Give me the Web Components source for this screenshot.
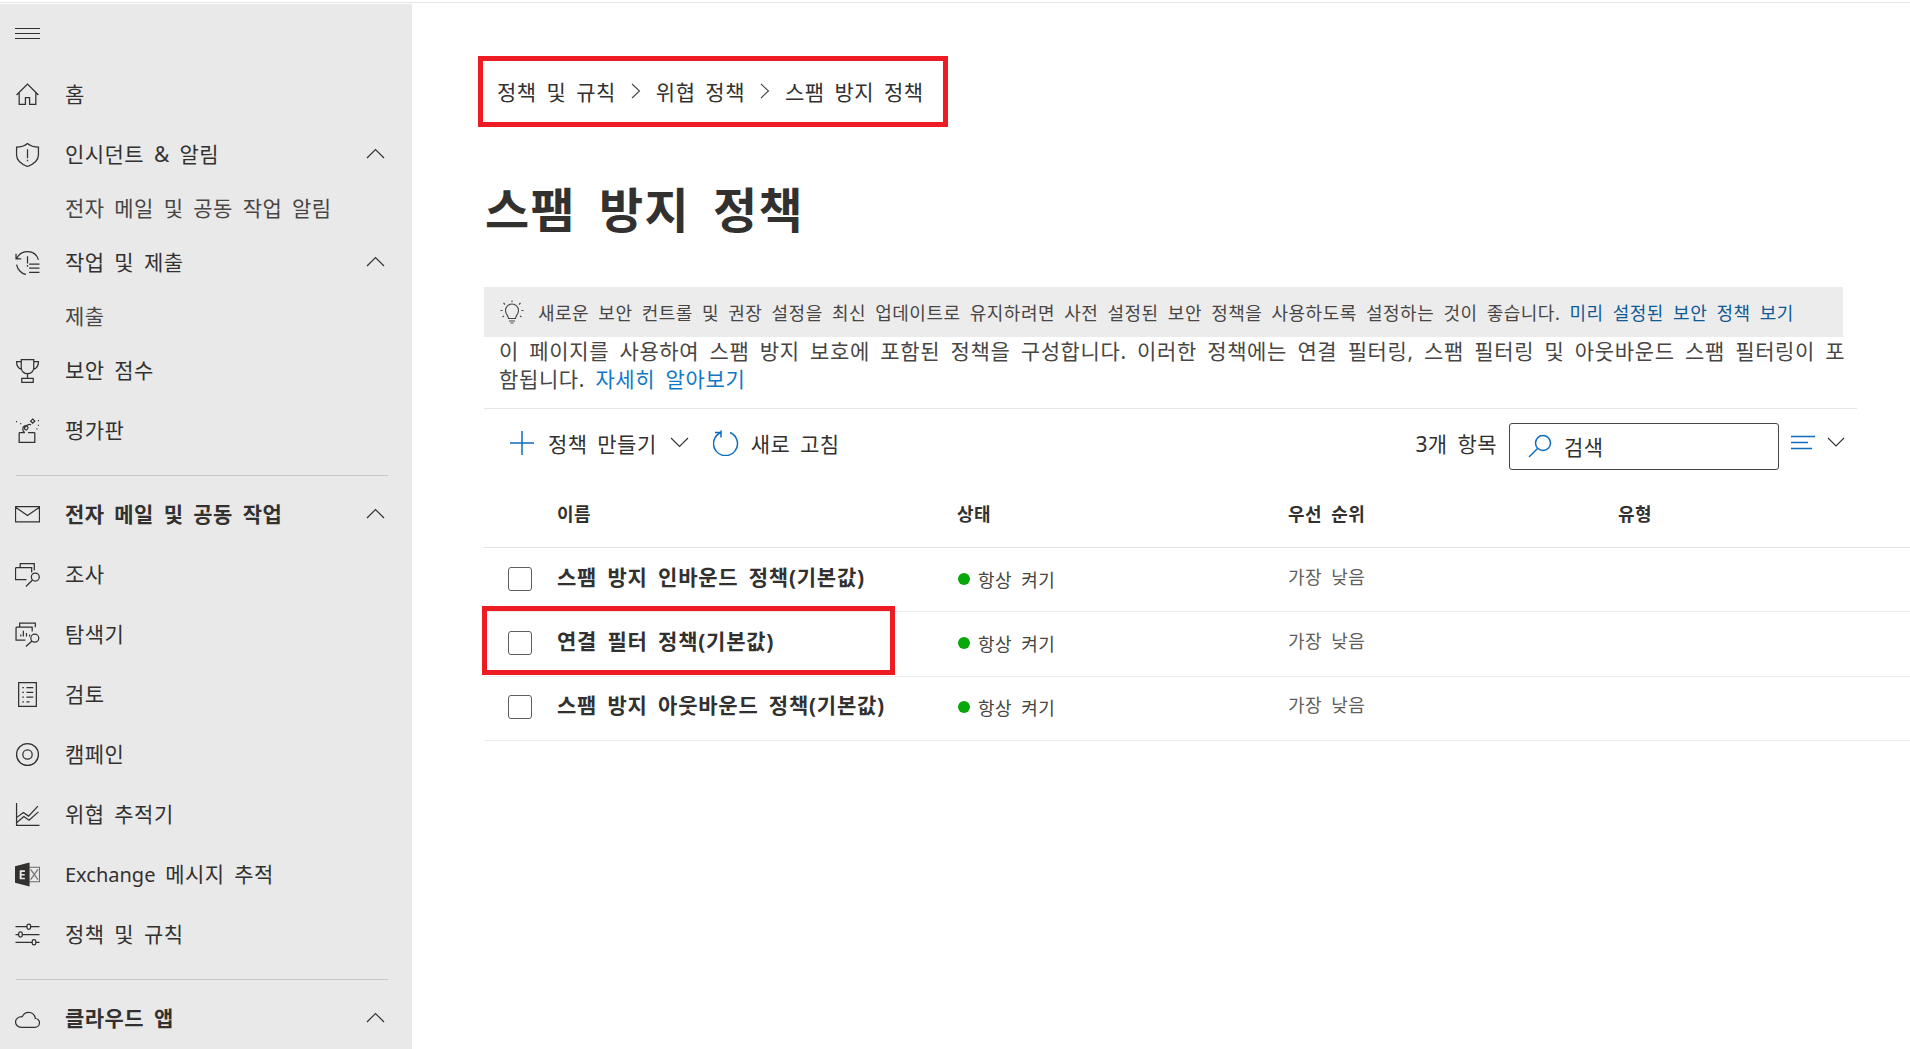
<!DOCTYPE html>
<html lang="ko">
<head>
<meta charset="utf-8">
<title>스팸 방지 정책</title>
<style>
  html, body { margin: 0; height: 100%; background: #fff; overflow: hidden; }
  body {
    font-family: "Noto Sans", "Noto Sans CJK KR", sans-serif;
    color: #323130;
  }
</style>
</head>
<body>
<app-shell>
  <side-nav slot="nav"></side-nav>
  <policy-page></policy-page>
</app-shell>

<script>
const ICONS = {
  home: '<path d="M1.5 12.5 12 2l10.500 10.500M4 10v11.500h6V15h4v6.500h6V10"/>',
  shield: '<path d="M12 1.500c3 2.500 6.500 3.500 10.500 3.500v7.500c0 5-4 8.500-10.500 11C5.500 21 1.500 17.500 1.500 12.500V5C5.500 5 9 4 12 1.500z"/><path d="M12 7v8.500M12 17v1.500"/>',
  history: '<path d="M1 3.500v5h5M1.500 8.500C3.500 4 7.500 1.500 12 1.500c5 0 9 3 10.500 8M1.500 14c1 5 5 9 9 9.500"/><path d="M12 6v7M12 14.500v1.500M13.500 13.500h10M13.500 17.500h10M13.500 21.500h10"/>',
  trophy: '<path d="M6 1.500h12v8c0 3-2.500 5.500-6 5.500s-6-2.500-6-5.500zM6 3.500H1.500c0 4 1.500 6.500 5 7.500M18 3.500h4.500c0 4-1.500 6.500-5 7.500M12 15v4M6.500 19.500h11v4h-11z"/>',
  dash: '<path d="M4 14v9.500h15V14M4 14h5.500M12.500 14H19M9.500 14C7 13 6.500 8.500 9.500 7.500c2.500-.8 4 2 2 3.500-1.500 1-3-.5-2-2 1-1.800 3.500-3.500 6-2.500"/><path d="M17 1l2 2-2 2-2-2zM1 3.500h1M5 5.500h1M22 7h1M22 2.500h1M20.500 10.500h1"/>',
  mail: '<path d="M.500 4.500h23v14.500H.500zM.500 5 12 13 23.500 5"/>',
  invest: '<path d="M5 5V1.500h13.500V8M.500 5.500H16V10M.500 5.500v11.500h10.500"/><circle cx="19.500" cy="14.500" r="3.800"/><path d="M16.800 17.300 10.500 23.500"/>',
  explorer: '<path d="M4.500 4.500V1h15v4M1 5h15.500v4M1 5v12.500h9"/><circle cx="19" cy="15.500" r="3.800"/><path d="M16.300 18.300 10.500 23.500M5.500 14v-2M8 14V8.500M11 14v-3.500M14 14v-2"/>',
  review: '<path d="M3.500.500h17v23h-17zM7 5.500h1.500M11 5.500h6.500M7 10h1.500M11 10h6.500M7 14.500h1.500M11 14.500h6.500M7 19h1.500M11 19h3"/>',
  campaign: '<circle cx="12" cy="12" r="10.500"/><circle cx="12" cy="12" r="4.500"/>',
  chart: '<path d="M1.500 1v21.500h22M1.500 15l6.500-5 5 3.500L22 4M1.500 20l7-6 5 3.500 9-8"/>',
  rules: '<path d="M.500 4.500h11M15 4.500h8.500M.500 12h3M7 12h16.500M.500 19.500h16M20 19.500h3.500"/><rect x="11.500" y="2" width="3.500" height="5" rx="1.700"/><rect x="3.500" y="9.500" width="3.500" height="5" rx="1.700"/><rect x="16.500" y="17" width="3.500" height="5" rx="1.700"/>',
  cloud: '<path d="M6 20.500h13c2.500 0 4.500-1.800 4.500-4.200 0-2.300-1.800-4.100-4-4.300C19 8.500 16.300 6 13 6c-2.800 0-5 1.700-6 4.200C3.300 10 .500 12.500.500 15.300c0 3 2.500 5.200 5.500 5.200z"/>'
};

function icon(name) {
  return `<svg viewBox="0 0 24 24" width="25" height="25" fill="none" stroke="currentColor" stroke-width="1.200">${ICONS[name]}</svg>`;
}

// 본문 글자 크기: 큰 글자 / 작은 글자
const TEXT_L = 'font-size:21px;letter-spacing:.45px;word-spacing:3.9px;';
const TEXT_S = 'font-size:18px;letter-spacing:.5px;word-spacing:4px;';
const COLS = '73px 400px 331px 330px 1fr';

class AppShell extends HTMLElement {
  constructor() {
    super();
    this.attachShadow({ mode: 'open' }).innerHTML = `
      <style>
        :host {
          display: flex;
          height: 1049px;
          box-sizing: border-box;
          padding-top: 4px;
          position: relative;
        }
        :host::before {
          content: '';
          position: absolute;
          left: 0; right: 0; top: 2px;
          height: 1px;
          background: #e6e6e6;
        }
      </style>
      <slot name="nav"></slot>
      <slot></slot>`;
  }
}

class NavItem extends HTMLElement {
  constructor() {
    super();
    this.attachShadow({ mode: 'open' });
  }
  connectedCallback() {
    const name = this.getAttribute('icon');
    const open = this.hasAttribute('open');
    this.shadowRoot.innerHTML = `
      <style>
        :host {
          display: flex;
          align-items: center;
          height: 60px;
          padding-left: 15px;
          padding-right: 27px;
          ${TEXT_L}
          color: #323130;
        }
        :host([sub]) { height: 48px; padding-left: 65px; color: #484644; }
        :host([strong]) { font-weight: 700; }
        .ic { width: 50px; height: 25px; flex: none; display: block; }
        .ic svg { display: block; }
        .label { flex: 1; white-space: nowrap; padding-bottom: 2px; }
        .chev { width: 19px; height: 11px; flex: none; margin-bottom: 2px; }
        ::slotted(span) { font-size: 20px; letter-spacing: 0; }
      </style>
      ${name ? `<span class="ic">${name === 'exchange' ? this.exchangeLogo() : icon(name)}</span>` : ''}
      <span class="label"><slot></slot></span>
      ${open ? '<svg class="chev" viewBox="0 0 19 11" fill="none" stroke="currentColor" stroke-width="1.200"><path d="M1 10 9.500 1.500 18 10"/></svg>' : ''}`;
  }
  exchangeLogo() {
    return `<svg viewBox="0 0 24 24" width="25" height="25">
      <path d="M13 5h10.500v14H13z" fill="#e9e9e9" stroke="#6b6b6b" stroke-width="1"/>
      <path d="M15 7l7 10M22 7l-7 10" stroke="#7a7a7a" stroke-width="1.300" fill="none"/>
      <path d="M0 4 14 .500v23L0 20z" fill="#323130"/>
      <path d="M4.500 8h5v1.500H6.300v2h3v1.500h-3v2h3.200V16.500h-5z" fill="#e9e9e9"/>
    </svg>`;
  }
}

class SideNav extends HTMLElement {
  constructor() {
    super();
    this.attachShadow({ mode: 'open' }).innerHTML = `
      <style>
        :host {
          display: block;
          width: 412px;
          flex: none;
          background: #e9e9e9;
          overflow: hidden;
        }
        .burger {
          display: flex;
          flex-direction: column;
          gap: 4px;
          width: 25px;
          margin: 24px 0 25px 15px;
          height: 11px;
        }
        .burger i { display: block; height: 1px; background: #323130; }
        hr {
          border: 0;
          height: 1px;
          background: #c8c8c8;
          margin: 15px 24px 8px 16px;
        }
      </style>
      <div class="burger"><i></i><i></i><i></i></div>
      <nav-item icon="home">홈</nav-item>
      <nav-item icon="shield" open>인시던트 &amp; 알림</nav-item>
      <nav-item sub>전자 메일 및 공동 작업 알림</nav-item>
      <nav-item icon="history" open>작업 및 제출</nav-item>
      <nav-item sub>제출</nav-item>
      <nav-item icon="trophy">보안 점수</nav-item>
      <nav-item icon="dash">평가판</nav-item>
      <hr>
      <nav-item icon="mail" open strong>전자 메일 및 공동 작업</nav-item>
      <nav-item icon="invest">조사</nav-item>
      <nav-item icon="explorer">탐색기</nav-item>
      <nav-item icon="review">검토</nav-item>
      <nav-item icon="campaign">캠페인</nav-item>
      <nav-item icon="chart">위협 추적기</nav-item>
      <nav-item icon="exchange"><span>Exchange</span> 메시지 추적</nav-item>
      <nav-item icon="rules">정책 및 규칙</nav-item>
      <hr>
      <nav-item icon="cloud" open strong>클라우드 앱</nav-item>`;
  }
}

class RedMark extends HTMLElement {
  constructor() {
    super();
    this.attachShadow({ mode: 'open' }).innerHTML = `
      <style>
        :host {
          display: block;
          position: absolute;
          box-sizing: border-box;
          border: 5px solid #ed1c24;
          pointer-events: none;
        }
      </style>`;
  }
}

class PolicyRow extends HTMLElement {
  constructor() {
    super();
    this.attachShadow({ mode: 'open' }).innerHTML = `
      <style>
        :host {
          display: grid;
          grid-template-columns: ${COLS};
          height: 64.4px;
          align-items: center;
          border-bottom: 1px solid #edebe9;
          box-sizing: border-box;
          ${TEXT_S}
        }
        .check {
          width: 24px;
          height: 24px;
          margin: 0 0 2px 24px;
          border: 1px solid #605e5c;
          border-radius: 3px;
          box-sizing: border-box;
        }
        .name { font-size: 21px; letter-spacing: .75px; word-spacing: 4.2px; font-weight: 700; white-space: nowrap; margin-bottom: 8px; }
        .state { display: flex; align-items: center; gap: 8px; color: #484644; margin-bottom: 2px; }
        .dot { width: 12px; height: 12px; border-radius: 50%; background: #0aa70a; margin-left: 1px; }
        .prio { color: #605e5c; margin-bottom: 8px; }
      </style>
      <div class="check"></div>
      <div class="name"><slot></slot></div>
      <div class="state"><span class="dot"></span>항상 켜기</div>
      <div class="prio">가장 낮음</div>`;
  }
}

class PolicyTable extends HTMLElement {
  constructor() {
    super();
    this.attachShadow({ mode: 'open' }).innerHTML = `
      <style>
        :host { display: block; margin-top: 5px; }
        .head {
          display: grid;
          grid-template-columns: ${COLS};
          height: 64px;
          padding-bottom: 6px;
          align-items: center;
          border-bottom: 1px solid #e3e3e3;
          box-sizing: border-box;
          ${TEXT_S}
          font-weight: 700;
        }
        .head span:first-child { grid-column: 2; }
      </style>
      <div class="head"><span>이름</span><span>상태</span><span>우선 순위</span><span>유형</span></div>
      <slot></slot>`;
  }
}

class PolicyToolbar extends HTMLElement {
  constructor() {
    super();
    this.attachShadow({ mode: 'open' }).innerHTML = `
      <style>
        :host {
          display: flex;
          align-items: center;
          height: 67px;
          margin: 0 53px 0 0;
          padding: 0 10px 3px 25px;
          border-top: 1px solid #e6e6e6;
          ${TEXT_L}
        }
        .btn { display: flex; align-items: center; white-space: nowrap; }
        svg { display: block; flex: none; }
        .count { margin-left: auto; margin-right: 12px; white-space: nowrap; }
        .search {
          width: 270px;
          height: 47px;
          border: 1px solid #484644;
          border-radius: 3px;
          box-sizing: border-box;
          display: flex;
          align-items: center;
          gap: 12px;
          padding-left: 18px;
          margin-top: 7px;
        }
        .right { margin-left: 12px; }
      </style>
      <div class="btn">
        <svg width="26" height="26" viewBox="0 0 26 26" fill="none" stroke="#0f6cbd" stroke-width="1.500"><path d="M13 1v24M1 13h24"/></svg>
        <span style="margin-left:13px">정책 만들기</span>
        <svg style="margin-left:13px" width="19" height="11" viewBox="0 0 19 11" fill="none" stroke="#323130" stroke-width="1.100"><path d="M1 1l8.500 8.500L18 1"/></svg>
      </div>
      <div class="btn" style="margin-left:24px">
        <svg width="26" height="26" viewBox="0 0 26 26" fill="none" stroke="#0f6cbd" stroke-width="1.500"><path d="M17 2.500A12 12 0 1 1 8 2.500M8 .5v7M8 2.500l-6 0" stroke-linejoin="round"/></svg>
        <span style="margin-left:12px">새로 고침</span>
      </div>
      <span class="count">3개 항목</span>
      <div class="search">
        <svg width="24" height="24" viewBox="0 0 24 24" fill="none" stroke="#0f6cbd" stroke-width="1.500"><circle cx="15" cy="9" r="7.500"/><path d="M9.500 14.500 1 23"/></svg>
        <span>검색</span>
      </div>
      <svg class="right" width="24" height="16" viewBox="0 0 24 16" fill="none" stroke="#0f6cbd" stroke-width="1.500"><path d="M0 1.500h24M0 7.500h17M0 13.500h21"/></svg>
      <svg style="margin-left:12px;margin-right:2px" width="18" height="11" viewBox="0 0 18 11" fill="none" stroke="#323130" stroke-width="1.100"><path d="M1 1l8 8 8-8"/></svg>`;
  }
}

class PolicyPage extends HTMLElement {
  constructor() {
    super();
    this.attachShadow({ mode: 'open' }).innerHTML = `
      <style>
        :host {
          display: block;
          flex: 1;
          min-width: 0;
          position: relative;
          padding: 0 0 0 72px;
        }
        .crumbs {
          display: flex;
          align-items: center;
          height: 40px;
          margin: 67px 0 0 13px;
          ${TEXT_L}
          letter-spacing: .5px;
          white-space: nowrap;
        }
        .crumbs svg { margin: 0 15px; }
        h1 {
          margin: 65px 0 0 1px;
          font-size: 48px;
          letter-spacing: 1.4px;
          word-spacing: 9px;
          font-weight: 700;
          line-height: 68px;
          white-space: nowrap;
        }
        .banner {
          display: flex;
          align-items: center;
          gap: 14px;
          height: 50px;
          margin: 43px 67px 0 0;
          padding-left: 16px;
          background: #ececec;
          ${TEXT_S}
          color: #484644;
          white-space: nowrap;
        }
        a { color: #0f5a94; text-decoration: none; }
        .intro a { color: #0f78c8; }
        .intro {
          margin: 0 53px 0 15px;
          font-size: 21px;
          letter-spacing: .62px;
          word-spacing: 4.3px;
          line-height: 28px;
          height: 71px;
          color: #484644;
          white-space: nowrap;
        }
      </style>
      <div class="crumbs">
        <span>정책 및 규칙</span>
        <svg width="10" height="16" viewBox="0 0 10 16" fill="none" stroke="#484644" stroke-width="1.100"><path d="M1 1l7.500 7L1 15"/></svg>
        <span>위협 정책</span>
        <svg width="10" height="16" viewBox="0 0 10 16" fill="none" stroke="#484644" stroke-width="1.100"><path d="M1 1l7.500 7L1 15"/></svg>
        <span>스팸 방지 정책</span>
      </div>
      <h1>스팸 방지 정책</h1>
      <div class="banner">
        <svg width="24" height="24" viewBox="0 0 24 24" fill="none" stroke="#484644" stroke-width="1.100"><path d="M8.500 18.500c0-3-3-4-3-8a6.500 6.500 0 0 1 13 0c0 4-3 5-3 8zM9 21h6M10.500 23h3M12 .5v1.500M3.500 3l1.500 1.500M20.500 3 19 4.500M.5 10.500h2M21.500 10.500h2M2.500 17l1.500-1M21.500 17 20 16"/></svg>
        <span>새로운 보안 컨트롤 및 권장 설정을 최신 업데이트로 유지하려면 사전 설정된 보안 정책을 사용하도록 설정하는 것이 좋습니다. <a>미리 설정된 보안 정책 보기</a></span>
      </div>
      <div class="intro"><div>이 페이지를 사용하여 스팸 방지 보호에 포함된 정책을 구성합니다. 이러한 정책에는 연결 필터링, 스팸 필터링 및 아웃바운드 스팸 필터링이 포</div><div>함됩니다. <a>자세히 알아보기</a></div></div>
      <policy-toolbar></policy-toolbar>
      <policy-table>
        <policy-row>스팸 방지 인바운드 정책(기본값)</policy-row>
        <policy-row>연결 필터 정책(기본값)</policy-row>
        <policy-row>스팸 방지 아웃바운드 정책(기본값)</policy-row>
      </policy-table>
      <red-mark style="left:66px;top:52px;width:470px;height:71px"></red-mark>
      <red-mark style="left:70px;top:602px;width:413px;height:69px"></red-mark>`;
  }
}

customElements.define('nav-item', NavItem);
customElements.define('side-nav', SideNav);
customElements.define('app-shell', AppShell);
customElements.define('red-mark', RedMark);
customElements.define('policy-row', PolicyRow);
customElements.define('policy-table', PolicyTable);
customElements.define('policy-toolbar', PolicyToolbar);
customElements.define('policy-page', PolicyPage);
</script>
</body>
</html>
